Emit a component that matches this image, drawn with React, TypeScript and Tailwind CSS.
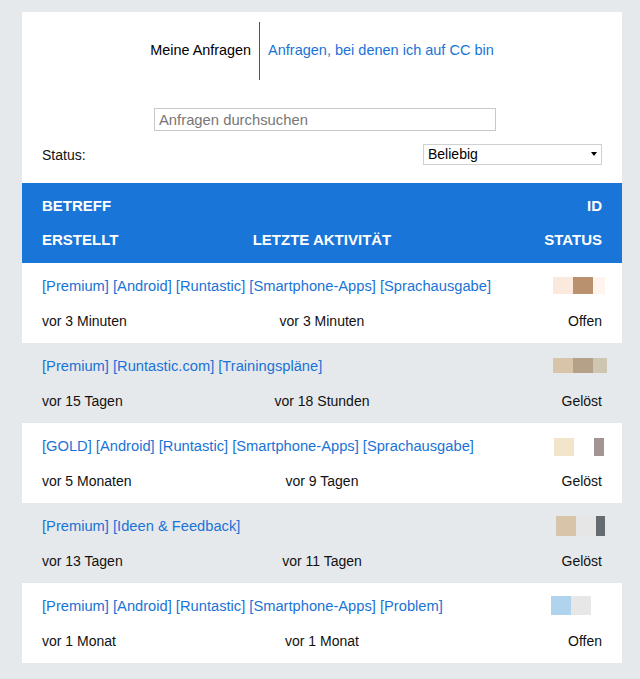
type Block = { w: number; color: string };

type Ticket = {
  subject: string;
  created: string;
  activity: string;
  status: string;
  id: { offset: number; top: number; h: number; blocks: Block[] };
};

const tickets: Ticket[] = [
  {
    subject: "[Premium] [Android] [Runtastic] [Smartphone-Apps] [Sprachausgabe]",
    created: "vor 3 Minuten",
    activity: "vor 3 Minuten",
    status: "Offen",
    id: {
      offset: 553,
      top: 14,
      h: 17,
      blocks: [
        { w: 20, color: "#fae9dc" },
        { w: 20, color: "#b9916f" },
        { w: 12, color: "#fff5ee" },
      ],
    },
  },
  {
    subject: "[Premium] [Runtastic.com] [Trainingspläne]",
    created: "vor 15 Tagen",
    activity: "vor 18 Stunden",
    status: "Gelöst",
    id: {
      offset: 553,
      top: 15,
      h: 15,
      blocks: [
        { w: 20, color: "#d8c4a8" },
        { w: 20, color: "#b5a088" },
        { w: 14, color: "#cfc6b2" },
      ],
    },
  },
  {
    subject: "[GOLD] [Android] [Runtastic] [Smartphone-Apps] [Sprachausgabe]",
    created: "vor 5 Monaten",
    activity: "vor 9 Tagen",
    status: "Gelöst",
    id: {
      offset: 554,
      top: 15,
      h: 18,
      blocks: [
        { w: 20, color: "#f3e4cc" },
        { w: 20, color: "#ffffff" },
        { w: 10, color: "#a39393" },
      ],
    },
  },
  {
    subject: "[Premium] [Ideen & Feedback]",
    created: "vor 13 Tagen",
    activity: "vor 11 Tagen",
    status: "Gelöst",
    id: {
      offset: 556,
      top: 13,
      h: 20,
      blocks: [
        { w: 20, color: "#d8c4a8" },
        { w: 20, color: "#e6e6e6" },
        { w: 9, color: "#656b6e" },
      ],
    },
  },
  {
    subject: "[Premium] [Android] [Runtastic] [Smartphone-Apps] [Problem]",
    created: "vor 1 Monat",
    activity: "vor 1 Monat",
    status: "Offen",
    id: {
      offset: 551,
      top: 13,
      h: 19,
      blocks: [
        { w: 20, color: "#b0d3ee" },
        { w: 20, color: "#e6e7e6" },
      ],
    },
  },
];

function TicketRow({ ticket, striped }: { ticket: Ticket; striped: boolean }) {
  return (
    <div className={`relative h-[80px] px-5 ${striped ? "bg-[#e6e9ec]" : "bg-white"}`}>
      <div className="flex h-[47px] items-center">
        <a href="#" className="text-[14.7px] text-[#1a73d6]">
          {ticket.subject}
        </a>
      </div>
      <div className="grid h-[22px] grid-cols-3 items-center text-[14px] text-[#111]">
        <span>{ticket.created}</span>
        <span className="text-center">{ticket.activity}</span>
        <span className="text-right">{ticket.status}</span>
      </div>
      <div
        className="absolute flex"
        style={{ left: ticket.id.offset - 22, top: ticket.id.top, height: ticket.id.h }}
      >
        {ticket.id.blocks.map((b, i) => (
          <span key={i} style={{ width: b.w, backgroundColor: b.color }} />
        ))}
      </div>
    </div>
  );
}

export default function App() {
  return (
    <div className="min-h-[679px] bg-[#e6e9ec] pt-3 font-['Liberation_Sans',Arial,sans-serif]">
      <div className="mx-[22px] w-[600px] bg-white pt-[10px]">
        <div className="flex h-[58px] items-center justify-center">
          <span className="pr-2 text-[14.4px] text-black">Meine Anfragen</span>
          <span className="h-full w-px bg-[#555]" />
          <a href="#" className="pl-2 text-[14.5px] text-[#1a73d6]">
            Anfragen, bei denen ich auf CC bin
          </a>
        </div>

        <div className="mt-7 pl-[132px]">
          <div className="flex h-[23px] w-[342px] items-center border border-[#c8c8c8] px-1 pt-px text-[14.8px] text-[#777]">
            Anfragen durchsuchen
          </div>
        </div>

        <div className="mt-3 flex h-[22px] items-center justify-between px-5">
          <span className="pt-[3px] text-[14px] text-[#111]">Status:</span>
          <div className="flex h-[21px] w-[179px] items-center justify-between border border-[#d0d0d0] pl-1 pr-[4px] text-[14px] text-black">
            <span>Beliebig</span>
            <span className="h-0 w-0 border-x-[3.5px] border-t-[4px] border-x-transparent border-t-black" />
          </div>
        </div>

        <div className="mt-[18px] h-[80px] bg-[#1a75d8] px-5 text-[15px] font-bold uppercase text-white">
          <div className="flex h-[46px] items-center justify-between">
            <span>Betreff</span>
            <span>ID</span>
          </div>
          <div className="grid h-[22px] grid-cols-3 items-center">
            <span>Erstellt</span>
            <span className="text-center">Letzte Aktivität</span>
            <span className="text-right">Status</span>
          </div>
        </div>

        {tickets.map((t, i) => (
          <TicketRow key={i} ticket={t} striped={i % 2 === 1} />
        ))}
      </div>
    </div>
  );
}
